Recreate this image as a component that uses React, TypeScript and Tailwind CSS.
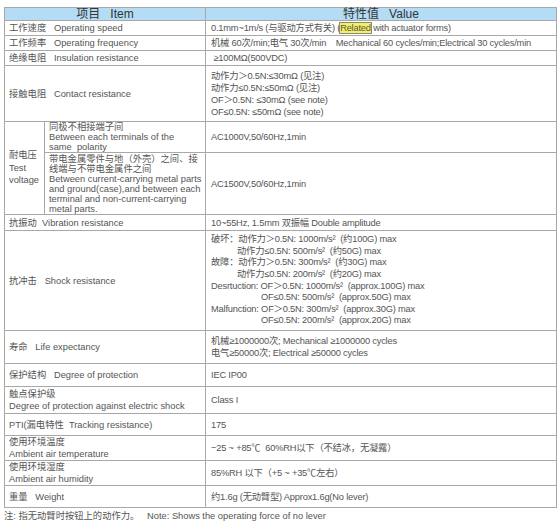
import React from "react";

const F = { fontFamily: '"Liberation Sans", "Noto Sans CJK SC", sans-serif' };

const B = "border border-[#a8a8a8] py-0 align-middle text-left whitespace-nowrap";
const L = B + " px-[4px]";
const R = B + " pl-[5px] pr-1 tracking-[-0.2px]";
const S = B + " pl-[4px] pr-0 leading-[10px]";

export default function App() {
  return (
    <div className="w-[560px] h-[521px] bg-white text-[#555] text-[9.3px] leading-[12px] overflow-hidden" style={F}>
      <div className="pt-[7px] pl-[4px]">
        <table className="table-fixed border-collapse w-[552px] border border-[#8a8a8a]">
          <colgroup>
            <col className="w-[40px]" />
            <col className="w-[161px]" />
            <col className="w-[351px]" />
          </colgroup>
          <tbody>
            <tr className="h-[13px] bg-[#b4dcf4] text-[#333] text-[12px] leading-[12px]">
              <td colSpan={2} className="border border-[#a8a8a8] p-0 text-center">项目&nbsp;&nbsp;&nbsp;Item</td>
              <td className="border border-[#a8a8a8] p-0 text-center">特性值&nbsp;&nbsp;&nbsp;Value</td>
            </tr>
            <tr className="h-[15px]">
              <td colSpan={2} className={L}>工作速度&nbsp;&nbsp;&nbsp;Operating speed</td>
              <td className={R}>
                0.1mm~1m/s (与驱动方式有关) (<span className="bg-[#f4f160] outline outline-1 outline-[#888]">Related</span> with actuator forms)
              </td>
            </tr>
            <tr className="h-[15px]">
              <td colSpan={2} className={L}>工作频率&nbsp;&nbsp;&nbsp;Operating frequency</td>
              <td className={R + " whitespace-pre"}>机械 60次/min;电气 30次/min    Mechanical 60 cycles/min;Electrical 30 cycles/min</td>
            </tr>
            <tr className="h-[15px]">
              <td colSpan={2} className={L}>绝缘电阻&nbsp;&nbsp;&nbsp;Insulation resistance</td>
              <td className={R}>&nbsp;≥100MΩ(500VDC)</td>
            </tr>
            <tr className="h-[56px]">
              <td colSpan={2} className={L}>接触电阻&nbsp;&nbsp;&nbsp;Contact resistance</td>
              <td className={R}>
                <div>动作力＞0.5N:≤30mΩ (见注)</div>
                <div>动作力≤0.5N:≤50mΩ (见注)</div>
                <div>OF＞0.5N: ≤30mΩ (see note)</div>
                <div>OF≤0.5N: ≤50mΩ (see note)</div>
              </td>
            </tr>
            <tr className="h-[30px]">
              <td rowSpan={2} className={L + " leading-[12.5px]"}>
                <div>耐电压</div>
                <div>Test</div>
                <div>voltage</div>
              </td>
              <td className={S}>
                <div>同极不相接端子间</div>
                <div>Between each terminals of the</div>
                <div>same&nbsp;&nbsp;polarity</div>
              </td>
              <td className={R}>AC1000V,50/60Hz,1min</td>
            </tr>
            <tr className="h-[62px]">
              <td className={S}>
                <div>带电金属零件与地（外壳）之间、接</div>
                <div>线端与不带电金属件之间</div>
                <div>Between current-carrying metal parts</div>
                <div>and ground(case),and between each</div>
                <div>terminal and non-current-carrying</div>
                <div>metal parts.</div>
              </td>
              <td className={R}>AC1500V,50/60Hz,1min</td>
            </tr>
            <tr className="h-[16px]">
              <td colSpan={2} className={L}>抗振动&nbsp;&nbsp;Vibration resistance</td>
              <td className={R}>10~55Hz, 1.5mm 双振幅 Double amplitude</td>
            </tr>
            <tr className="h-[100px]">
              <td colSpan={2} className={L}>抗冲击&nbsp;&nbsp;&nbsp;Shock resistance</td>
              <td className={R + " leading-[11.6px]"}>
                <div>破坏：动作力＞0.5N: 1000m/s²&nbsp;&nbsp;(约100G) max</div>
                <div className="pl-[26px]">动作力≤0.5N: 500m/s²&nbsp;&nbsp;(约50G) max</div>
                <div>故障：动作力＞0.5N: 300m/s²&nbsp;&nbsp;(约30G) max</div>
                <div className="pl-[26px]">动作力≤0.5N: 200m/s²&nbsp;&nbsp;(约20G) max</div>
                <div>Desrtuction: OF＞0.5N: 1000m/s²&nbsp;&nbsp;(approx.100G) max</div>
                <div className="pl-[50px]">OF≤0.5N: 500m/s²&nbsp;&nbsp;(approx.50G) max</div>
                <div>Malfunction: OF＞0.5N: 300m/s²&nbsp;&nbsp;(approx.30G) max</div>
                <div className="pl-[50px]">OF≤0.5N: 200m/s²&nbsp;&nbsp;(approx.20G) max</div>
              </td>
            </tr>
            <tr className="h-[33px]">
              <td colSpan={2} className={L}>寿命&nbsp;&nbsp;&nbsp;Life expectancy</td>
              <td className={R}>
                <div>机械≥1000000次; Mechanical ≥1000000 cycles</div>
                <div>电气≥50000次; Electrical ≥50000 cycles</div>
              </td>
            </tr>
            <tr className="h-[23px]">
              <td colSpan={2} className={L}>保护结构&nbsp;&nbsp;&nbsp;Degree of protection</td>
              <td className={R}>IEC IP00</td>
            </tr>
            <tr className="h-[27px]">
              <td colSpan={2} className={L}>
                <div>触点保护级</div>
                <div>Degree of protection against electric shock</div>
              </td>
              <td className={R}>Class I</td>
            </tr>
            <tr className="h-[22px]">
              <td colSpan={2} className={L}>PTI(漏电特性&nbsp;&nbsp;Tracking resistance)</td>
              <td className={R}>175</td>
            </tr>
            <tr className="h-[23px]">
              <td colSpan={2} className={L}>
                <div>使用环境温度</div>
                <div>Ambient air temperature</div>
              </td>
              <td className={R}>−25 ~ +85℃&nbsp;&nbsp;60%RH以下（不结冰，无凝露）</td>
            </tr>
            <tr className="h-[25px]">
              <td colSpan={2} className={L}>
                <div>使用环境湿度</div>
                <div>Ambient air humidity</div>
              </td>
              <td className={R}>85%RH 以下（+5 ~ +35℃左右）</td>
            </tr>
            <tr className="h-[22px]">
              <td colSpan={2} className={L}>重量&nbsp;&nbsp;&nbsp;Weight</td>
              <td className={R}>约1.6g (无动臂型) Approx1.6g(No lever)</td>
            </tr>
          </tbody>
        </table>
        <div className="mt-[2px] whitespace-pre">注: 指无动臂时按钮上的动作力。   Note: Shows the operating force of no lever</div>
      </div>
    </div>
  );
}
